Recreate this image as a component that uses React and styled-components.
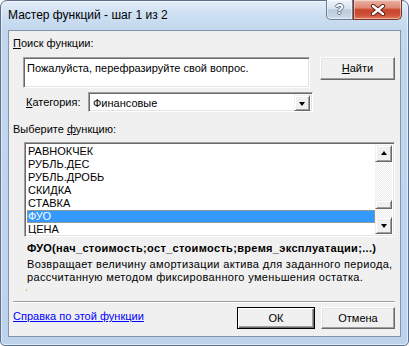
import React from 'react';
import styled, { createGlobalStyle } from 'styled-components';

const UI = `"Liberation Sans", Arial, "DejaVu Sans", sans-serif`;

const Global = createGlobalStyle`
  html, body { margin: 0; padding: 0; background: #f7f7f7; }
  body { width: 409px; height: 346px; overflow: hidden; }
  * { box-sizing: border-box; }
`;

const Window = styled.div`
  width: 409px;
  height: 346px;
  border: 1px solid #5d708c;
  border-radius: 7px 7px 5px 5px;
  background: linear-gradient(180deg, #e3edf8 0px, #cddff2 14px, #c2d7ee 30px, #bdd3ec 100%);
  box-shadow: inset 0 0 0 1px rgba(255, 255, 255, 0.55);
  display: flex;
  flex-direction: column;
  padding: 0 7px 8px 7px;
`;

const TitleBar = styled.div`
  height: 29px;
  display: flex;
  align-items: flex-start;
`;

const Title = styled.div`
  font: 12px/15px ${UI};
  color: #000;
  margin-top: 7px;
`;

const Caption = styled.div`
  margin-left: auto;
  margin-top: -1px;
  margin-right: -1px;
  display: flex;
`;

const CapBtn = styled.div`
  height: 20px;
  width: ${p => p.$w}px;
  display: flex;
  align-items: center;
  justify-content: center;
  border: 1px solid ${p => (p.$close ? '#7c3326' : '#6a7c96')};
  border-top: none;
  border-radius: ${p => (p.$close ? '0 0 5px 0' : '0 0 0 5px')};
  background: ${p =>
    p.$close
      ? 'linear-gradient(180deg, #eab2a4 0%, #df8a75 40%, #c9452c 52%, #cf5238 80%, #e07c5e 100%)'
      : 'linear-gradient(180deg, #eef3f9 0%, #d8e2ee 45%, #bccadb 52%, #c6d4e4 85%, #d6e2ef 100%)'};
  box-shadow: inset 0 0 0 1px rgba(255, 255, 255, 0.45);
`;

const HelpGlyph = styled.span`
  font: bold 14px/14px ${UI};
  color: #fff;
  text-shadow: 0 0 1px #4a5a70, 1px 0 0 #6d7d93, -1px 0 0 #6d7d93, 0 1px 0 #6d7d93, 0 -1px 0 #6d7d93;
  margin-top: -1px;
`;

const Client = styled.div`
  flex: 1;
  border: 1px solid #8494ab;
  background: #f0f0f0;
  display: flex;
  flex-direction: column;
  padding: 6px 5px 0 4px;
  font: 11px/13px ${UI};
  color: #000;
`;

const Label = styled.div`
  height: 13px;
  margin-top: ${p => p.$mt || 0}px;
  margin-left: ${p => p.$ml || 0}px;
  white-space: nowrap;
`;

const Row = styled.div`
  display: flex;
  align-items: ${p => p.$align || 'flex-start'};
  margin-top: ${p => p.$mt || 0}px;
  padding-left: ${p => p.$pl || 0}px;
`;

const Sunken = styled.div`
  border: 1px solid;
  border-color: #a0a0a0 #ffffff #ffffff #a0a0a0;
  box-shadow: inset 1px 1px 0 #696969, inset -1px -1px 0 #e3e3e3;
  background: #fff;
`;

const SearchBox = styled(Sunken)`
  width: 287px;
  height: 31px;
  padding: 4px 3px;
  white-space: nowrap;
  overflow: hidden;
`;

const Button = styled.button`
  font: 11px/13px ${UI};
  color: #000;
  padding: 0;
  margin-left: ${p => p.$ml || 0}px;
  width: ${p => p.$w}px;
  height: ${p => p.$h || 22}px;
  background: #f0f0f0;
  border: 1px solid;
  border-color: ${p => (p.$default ? '#000 #000 #000 #000' : '#ffffff #696969 #696969 #ffffff')};
  box-shadow: ${p =>
    p.$default
      ? 'inset 1px 1px 0 #ffffff, inset -1px -1px 0 #696969, inset -2px -2px 0 #a0a0a0'
      : 'inset -1px -1px 0 #a0a0a0, inset 1px 1px 0 #e3e3e3'};
`;

const CatLabel = styled.div`
  width: 62px;
  white-space: nowrap;
`;

const Select = styled(Sunken)`
  width: 225px;
  height: 20px;
  padding: 2px;
  display: flex;
  align-items: stretch;
`;

const SelectText = styled.div`
  flex: 1;
  padding: 2px 0 0 2px;
`;

const ArrowBtn = styled.div`
  width: ${p => p.$w || 16}px;
  height: ${p => p.$h || 16}px;
  background: #f0f0f0;
  border: 1px solid;
  border-color: #f0f0f0 #696969 #696969 #f0f0f0;
  box-shadow: inset 1px 1px 0 #ffffff, inset -1px -1px 0 #a0a0a0;
  display: flex;
  align-items: center;
  justify-content: center;
  flex-shrink: 0;
`;

const Tri = styled.div`
  width: 0;
  height: 0;
  border-left: 3.5px solid transparent;
  border-right: 3.5px solid transparent;
  ${p => (p.$up ? 'border-bottom: 4px solid #000;' : 'border-top: 4px solid #000;')}
  margin-top: ${p => (p.$up ? -1 : 1)}px;
`;

const ListBox = styled(Sunken)`
  margin-left: 11px;
  margin-top: 6px;
  width: 371px;
  height: 95px;
  padding: 2px;
  display: flex;
`;

const Items = styled.div`
  flex: 1;
  overflow: hidden;
`;

const Item = styled.div`
  height: 13px;
  line-height: 13px;
  padding-left: 1px;
  white-space: nowrap;
  color: ${p => (p.$sel ? '#fff' : '#000')};
  background: ${p => (p.$sel ? '#3399ff' : 'transparent')};
  outline: ${p => (p.$sel ? '1px dotted #e59a3a' : 'none')};
  outline-offset: -1px;
`;

const ScrollBar = styled.div`
  width: 17px;
  display: flex;
  flex-direction: column;
`;

const Track = styled.div`
  flex: 1;
  background: repeating-conic-gradient(#ffffff 0% 25%, #ebebeb 0% 50%) 0 0 / 2px 2px;
  display: flex;
  flex-direction: column;
`;

const Thumb = styled.div`
  height: 9px;
  background: #f0f0f0;
  border: 1px solid;
  border-color: #f0f0f0 #696969 #696969 #f0f0f0;
  box-shadow: inset 1px 1px 0 #ffffff, inset -1px -1px 0 #a0a0a0;
`;

const Signature = styled.div`
  margin-top: 5px;
  padding-left: 14px;
  font-weight: bold;
  letter-spacing: 0.33px;
  white-space: nowrap;
`;

const Desc = styled.div`
  margin-top: 3px;
  padding-left: 14px;
  line-height: 13px;
  letter-spacing: 0.33px;
  white-space: nowrap;
`;

const Caret = styled.div`
  width: 1px;
  height: 2px;
  margin: 5px 0 0 13px;
  background: #f2b84b;
`;

const Separator = styled.div`
  margin-top: 10px;
  height: 2px;
  border-top: 1px solid #a0a0a0;
  border-bottom: 1px solid #ffffff;
`;

const Footer = styled.div`
  margin-top: 4px;
  display: flex;
  align-items: flex-start;
`;

const Link = styled.a`
  margin-top: 3px;
  color: #0000ff;
  text-decoration: underline;
  white-space: nowrap;
  cursor: pointer;
`;

const Spacer = styled.div`
  flex: 1;
`;

const items = ['РАВНОКЧЕК', 'РУБЛЬ.ДЕС', 'РУБЛЬ.ДРОБЬ', 'СКИДКА', 'СТАВКА', 'ФУО', 'ЦЕНА'];

export default function App() {
  return (
    <>
      <Global />
      <Window>
        <TitleBar>
          <Title>Мастер функций - шаг 1 из 2</Title>
          <Caption>
            <CapBtn $w={27}>
              <HelpGlyph>?</HelpGlyph>
            </CapBtn>
            <CapBtn $w={49} $close>
              <svg width="16" height="12" viewBox="0 0 16 12">
                <path d="M3 2 L13 10 M13 2 L3 10" stroke="#5a1c12" strokeWidth="4.2" strokeLinecap="round" />
                <path d="M3 2 L13 10 M13 2 L3 10" stroke="#ffffff" strokeWidth="2.4" strokeLinecap="round" />
              </svg>
            </CapBtn>
          </Caption>
        </TitleBar>
        <Client>
          <Label>
            <u>П</u>оиск функции:
          </Label>
          <Row $mt={7} $pl={10}>
            <SearchBox>Пожалуйста, перефразируйте свой вопрос.</SearchBox>
            <Button $ml={10} $w={75} $h={23}>
              <u>Н</u>айти
            </Button>
          </Row>
          <Row $mt={4} $pl={13} $align="center">
            <CatLabel>
              <u>К</u>атегория:
            </CatLabel>
            <Select>
              <SelectText>Финансовые</SelectText>
              <ArrowBtn>
                <Tri />
              </ArrowBtn>
            </Select>
          </Row>
          <Label $mt={11}>
            Выберите <u>ф</u>ункцию:
          </Label>
          <ListBox>
            <Items>
              {items.map(t => (
                <Item key={t} $sel={t === 'ФУО'}>
                  {t}
                </Item>
              ))}
            </Items>
            <ScrollBar>
              <ArrowBtn $w={17} $h={17}>
                <Tri $up />
              </ArrowBtn>
              <Track>
                <Thumb style={{ marginTop: 38 }} />
              </Track>
              <ArrowBtn $w={17} $h={17}>
                <Tri />
              </ArrowBtn>
            </ScrollBar>
          </ListBox>
          <Signature>ФУО(нач_стоимость;ост_стоимость;время_эксплуатации;...)</Signature>
          <Desc>
            Возвращает величину амортизации актива для заданного периода,
            <br />
            рассчитанную методом фиксированного уменьшения остатка.
          </Desc>
          <Caret />
          <Separator />
          <Footer>
            <Link>Справка по этой функции</Link>
            <Spacer />
            <Button $default $w={78} $h={22}>
              ОК
            </Button>
            <Button $ml={6} $w={74} $h={22}>
              Отмена
            </Button>
          </Footer>
        </Client>
      </Window>
    </>
  );
}
